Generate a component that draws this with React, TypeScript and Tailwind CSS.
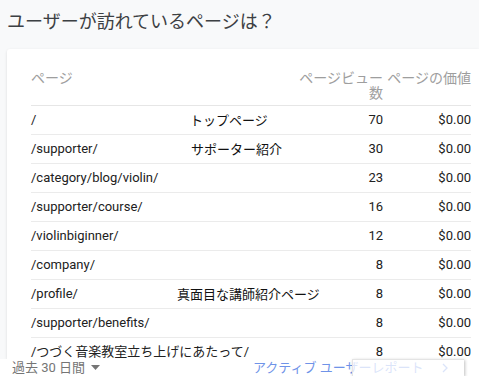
import React from "react";

// Rows of the pages table; note = hand-written label placed over the row
interface PageRow {
  path: string;
  views: number;
  note?: string;
  noteLeft?: string;
}

const rows: PageRow[] = [
  { path: "/", views: 70, note: "トップページ", noteLeft: "left-[159px]" },
  { path: "/supporter/", views: 30, note: "サポーター紹介", noteLeft: "left-[160px]" },
  { path: "/category/blog/violin/", views: 23 },
  { path: "/supporter/course/", views: 16 },
  { path: "/violinbiginner/", views: 12 },
  { path: "/company/", views: 8 },
  { path: "/profile/", views: 8, note: "真面目な講師紹介ページ", noteLeft: "left-[146px]" },
  { path: "/supporter/benefits/", views: 8 },
  { path: "/つづく音楽教室立ち上げにあたって/", views: 8 },
];

const App = () => {
  return (
    <div className="h-[376px] w-[479px] overflow-hidden bg-[#f8f9fa] flex flex-col font-[Roboto,'Noto_Sans_CJK_JP',sans-serif]">
      <h1 className="pl-[7px] pt-[10px] text-[18px] leading-[24px] text-[#3c4043] font-normal whitespace-nowrap">
        ユーザーが訪れているページは？
      </h1>

      <div className="mt-[15px] ml-[7px] flex-1 min-h-0 overflow-hidden bg-white rounded-tl-[3px] shadow-[0_1px_3px_rgba(0,0,0,0.12)] pt-[22px] pl-[24px] pr-[8px]">
        <div className="grid grid-cols-[1fr_85px_88px] text-[14px] leading-[15px] text-[#9e9e9e] pb-[4px] border-b border-[#e6e6e6]">
          <div>ページ</div>
          <div className="text-right">ページビュー数</div>
          <div className="text-right whitespace-nowrap">ページの価値</div>
        </div>

        {rows.map((row) => (
          <div
            key={row.path}
            className="relative grid grid-cols-[1fr_85px_88px] h-[29px] items-center border-b border-[#ebebeb] text-[13px] text-[#212121]"
          >
            <div className="whitespace-nowrap">{row.path}</div>
            <div className="text-right">{row.views}</div>
            <div className="text-right">$0.00</div>
            {row.note && (
              <div
                className={
                  "absolute inset-y-0 flex items-center whitespace-nowrap text-[13px] text-[#111] font-['Noto_Sans_CJK_JP',sans-serif] " +
                  row.noteLeft
                }
              >
                {row.note}
              </div>
            )}
          </div>
        ))}
      </div>

      <div className="relative h-[17px] shrink-0 bg-white flex items-center text-[13px] leading-[17px]">
        <div className="w-[253px] pl-[12px] flex items-center text-[#757575]">
          <span>過去 30 日間</span>
          <svg className="ml-[6px]" width="9" height="5" viewBox="0 0 9 5">
            <path d="M0 0h9L4.5 5z" fill="#757575" />
          </svg>
        </div>
        <div className="flex items-center text-[#6f93e8] whitespace-nowrap">
          <span>アクティブ ユーザーレポート</span>
          <svg className="ml-[18px]" width="6" height="10" viewBox="0 0 6 10">
            <path d="M1 1l4 4-4 4" fill="none" stroke="#6f93e8" strokeWidth="1.3" />
          </svg>
        </div>
        <div className="absolute left-[352px] top-0 w-[112px] h-full bg-white/75 border-t border-l border-[#e4e4e4] shadow-[1px_1px_3px_rgba(0,0,0,0.25)]" />
      </div>
    </div>
  );
};

export default App;
